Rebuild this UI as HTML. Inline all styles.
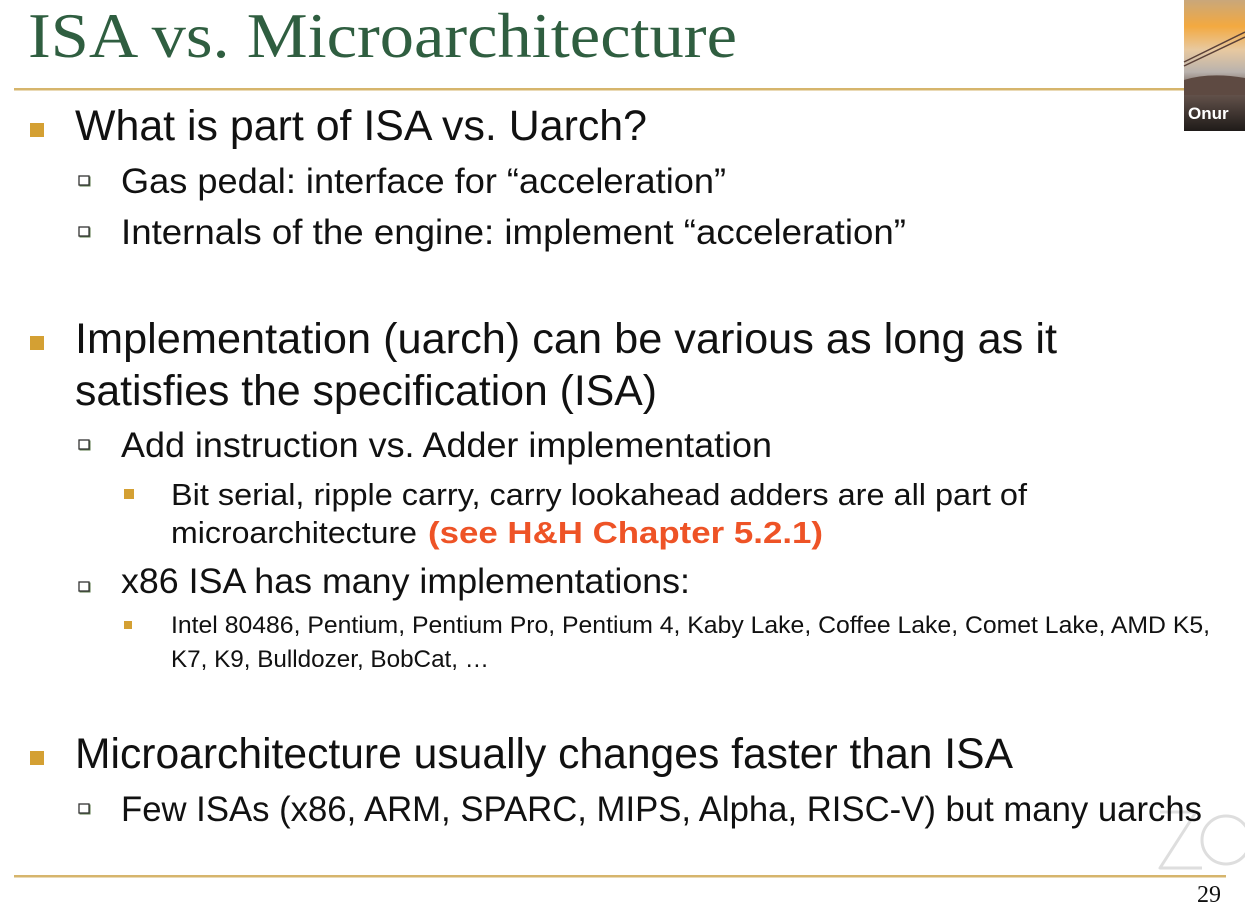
<!DOCTYPE html>
<html><head><meta charset="utf-8"><style>
html,body{margin:0;padding:0;background:#fff;width:1245px;height:908px;overflow:hidden}
svg{display:block}
text{font-family:"Liberation Sans",sans-serif;fill:#111}
</style></head><body>
<svg width="1245" height="908" viewBox="0 0 1245 908">
<defs>
<linearGradient id="sky" x1="0" y1="0" x2="0" y2="1">
<stop offset="0" stop-color="#c9a77a"/><stop offset="0.2" stop-color="#f3a940"/><stop offset="0.38" stop-color="#e8c9a0"/><stop offset="0.55" stop-color="#b9b2ad"/><stop offset="0.68" stop-color="#6d5a52"/><stop offset="1" stop-color="#1f1b19"/>
</linearGradient>
<g id="hb"><rect x="0.5" y="0.5" width="11" height="10" fill="#5b7a4a"/><rect x="0" y="0" width="10" height="9" fill="#fff" stroke="#333" stroke-width="1.3"/></g>
</defs>
<text x="28" y="57" textLength="709" lengthAdjust="spacingAndGlyphs" style="font-family:'Liberation Serif',serif;font-size:63px;fill:#2f5e40">ISA vs. Microarchitecture</text>
<rect x="14" y="88" width="1170" height="2.5" fill="#d6b56c"/>
<rect x="14" y="875" width="1212" height="2.5" fill="#d6b56c"/>
<text x="1197" y="902" style="font-family:'Liberation Serif',serif;font-size:24px">29</text>
<rect x="1184" y="0" width="61" height="131" fill="url(#sky)"/>
<path d="M1184 62 L1245 32 M1184 66 L1245 37" stroke="#5a4038" stroke-width="1.5"/>
<path d="M1184 80 Q1210 72 1245 78 L1245 95 L1184 95Z" fill="#5e4a42"/>
<text x="1188" y="119" style="font-size:17px;font-weight:bold;fill:#fff">Onur</text>
<g fill="none" stroke="#dedede" stroke-width="3" stroke-linejoin="round">
<path d="M1160 812 L1196 812 L1160 868 L1202 868"/>
<circle cx="1226" cy="840" r="24"/>
</g>
<rect x="30" y="123" width="14" height="14" fill="#d4a033"/>
<rect x="30" y="336" width="14" height="14" fill="#d4a033"/>
<rect x="30" y="751" width="14" height="14" fill="#d4a033"/>
<text x="75" y="140" textLength="572" lengthAdjust="spacingAndGlyphs" style="font-size:43px">What is part of ISA vs. Uarch?</text>
<text x="75" y="353" textLength="982" lengthAdjust="spacingAndGlyphs" style="font-size:43px">Implementation (uarch) can be various as long as it</text>
<text x="75" y="405" textLength="582" lengthAdjust="spacingAndGlyphs" style="font-size:43px">satisfies the specification (ISA)</text>
<text x="75" y="768" textLength="938" lengthAdjust="spacingAndGlyphs" style="font-size:43px">Microarchitecture usually changes faster than ISA</text>
<use href="#hb" x="79" y="176"/>
<use href="#hb" x="79" y="227"/>
<use href="#hb" x="79" y="440"/>
<use href="#hb" x="79" y="582"/>
<use href="#hb" x="79" y="804"/>
<text x="121" y="193" textLength="605" lengthAdjust="spacingAndGlyphs" style="font-size:35px">Gas pedal: interface for “acceleration”</text>
<text x="121" y="244" textLength="785" lengthAdjust="spacingAndGlyphs" style="font-size:35px">Internals of the engine: implement “acceleration”</text>
<text x="121" y="457" textLength="651" lengthAdjust="spacingAndGlyphs" style="font-size:35px">Add instruction vs. Adder implementation</text>
<text x="121" y="593" textLength="569" lengthAdjust="spacingAndGlyphs" style="font-size:35px">x86 ISA has many implementations:</text>
<text x="121" y="821" textLength="1081" lengthAdjust="spacingAndGlyphs" style="font-size:35px">Few ISAs (x86, ARM, SPARC, MIPS, Alpha, RISC-V) but many uarchs</text>
<rect x="124" y="489" width="10" height="10" fill="#d4a033"/>
<text x="171" y="505" textLength="856" lengthAdjust="spacingAndGlyphs" style="font-size:31px">Bit serial, ripple carry, carry lookahead adders are all part of</text>
<text x="171" y="543" textLength="246" lengthAdjust="spacingAndGlyphs" style="font-size:31px">microarchitecture</text>
<text x="428" y="543" textLength="395" lengthAdjust="spacingAndGlyphs" style="font-size:31px;font-weight:bold;fill:#ee5326">(see H&amp;H Chapter 5.2.1)</text>
<rect x="124" y="621" width="8" height="8" fill="#d4a033"/>
<text x="171" y="633" textLength="1039" lengthAdjust="spacingAndGlyphs" style="font-size:24px">Intel 80486, Pentium, Pentium Pro, Pentium 4, Kaby Lake, Coffee Lake, Comet Lake, AMD K5,</text>
<text x="171" y="667" textLength="318" lengthAdjust="spacingAndGlyphs" style="font-size:24px">K7, K9, Bulldozer, BobCat, …</text>
</svg>
</body></html>
